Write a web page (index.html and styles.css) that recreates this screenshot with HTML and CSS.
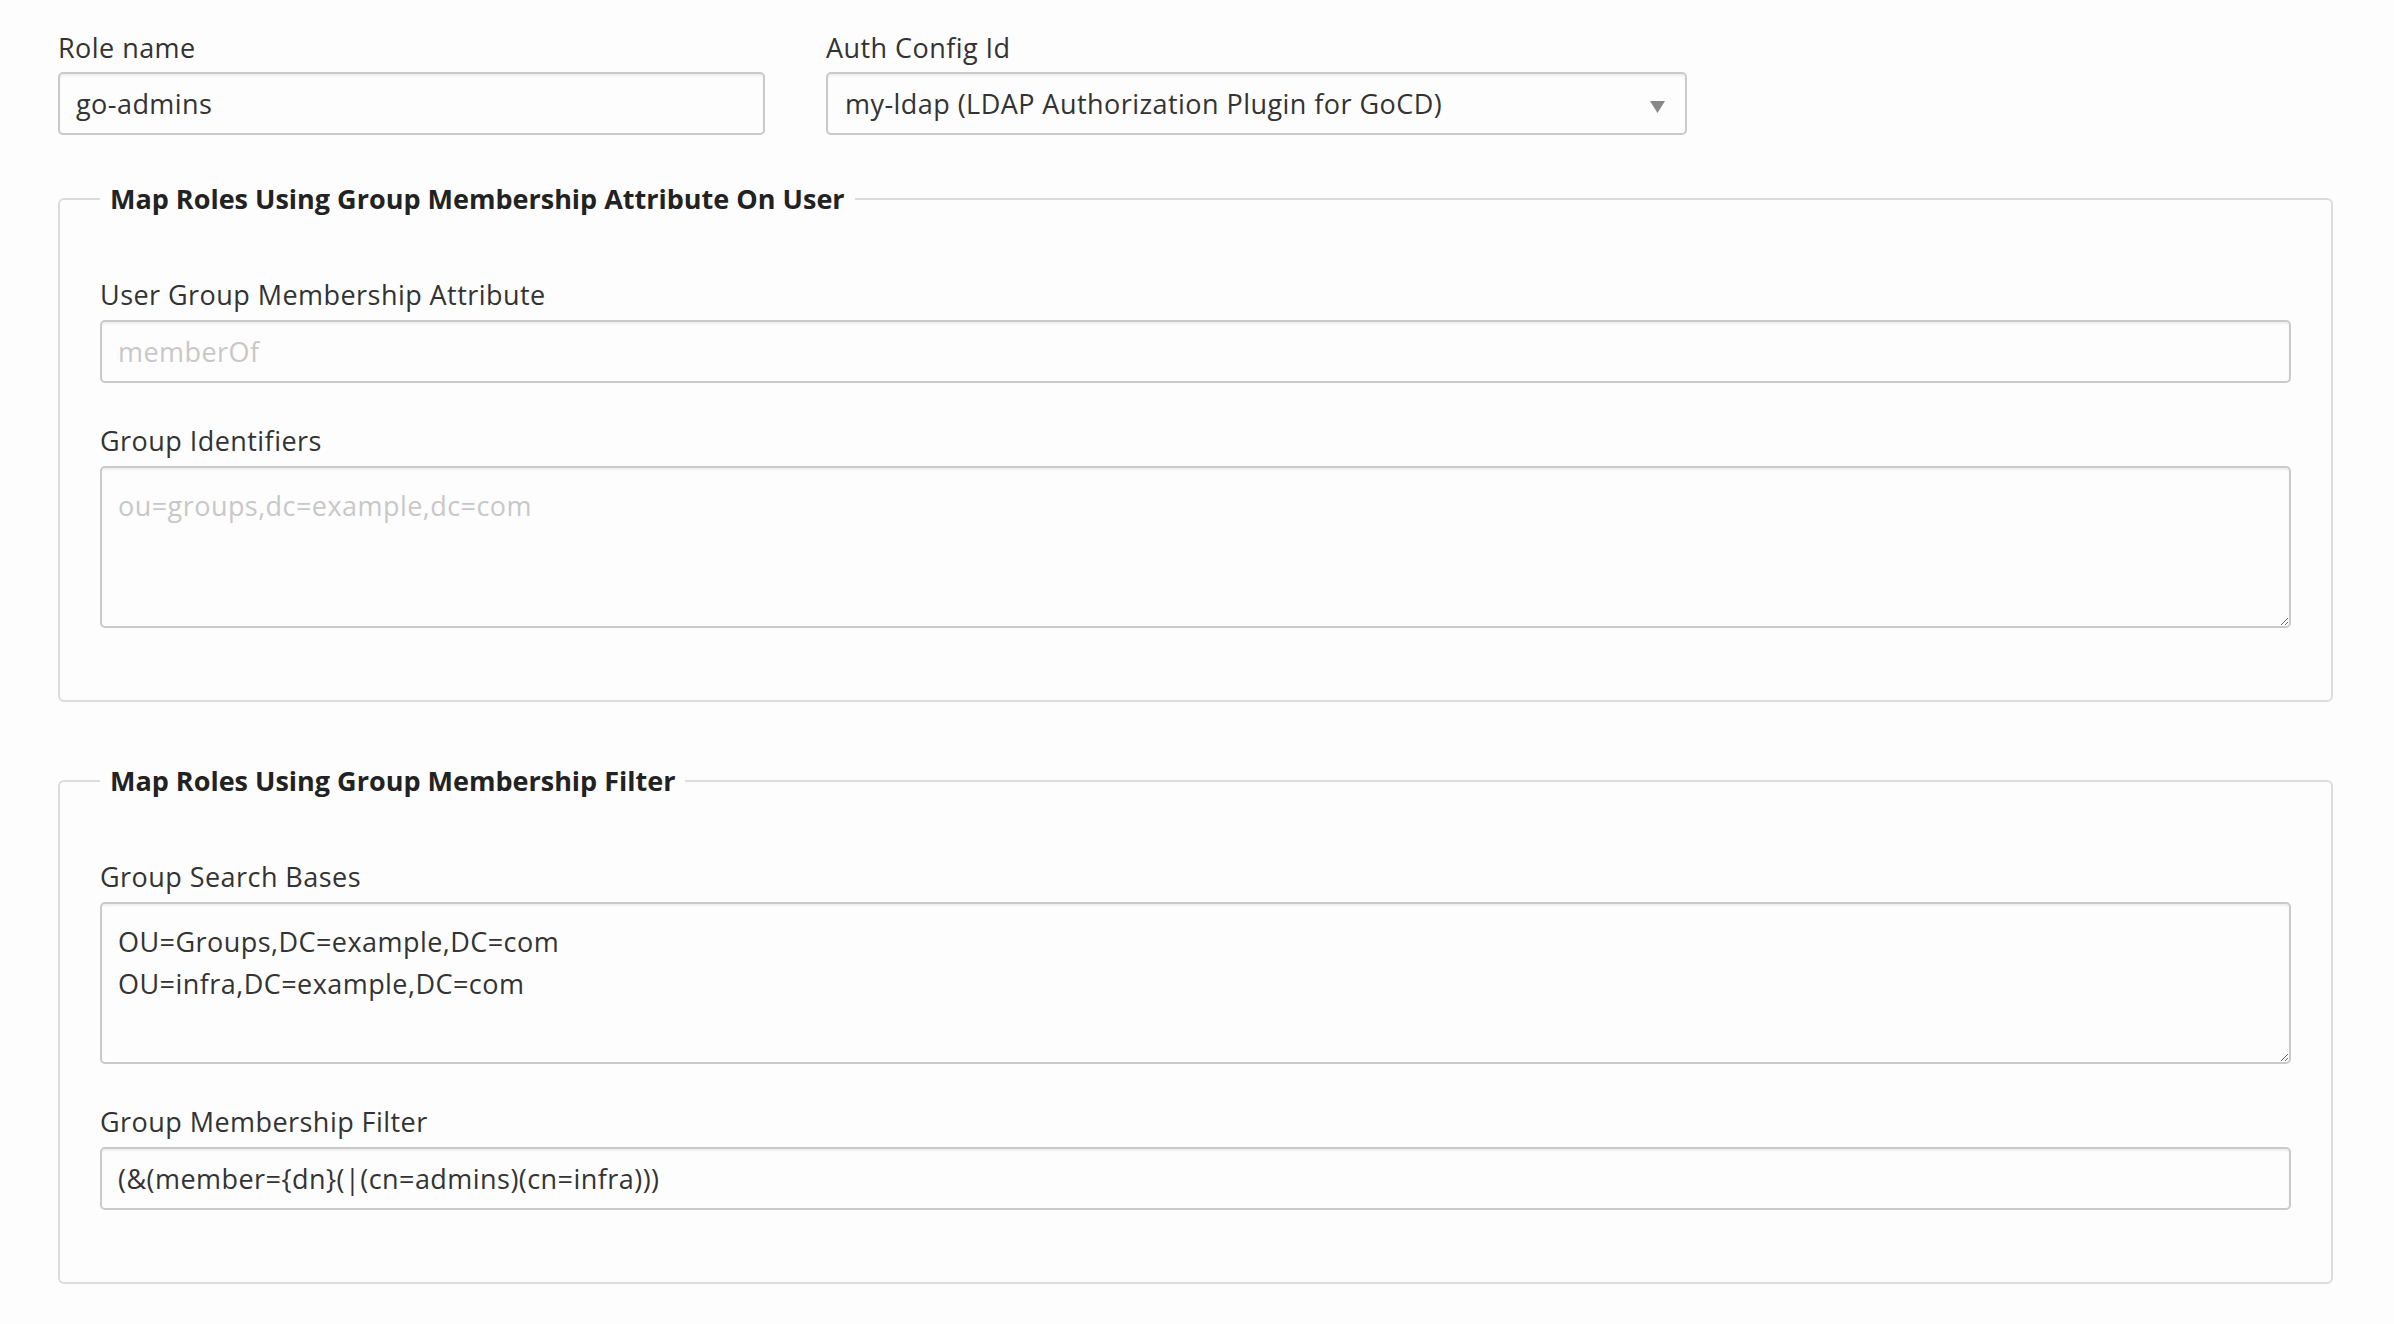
FILE: index.html
```html
<!DOCTYPE html>
<html lang="en">
<head>
<meta charset="utf-8">
<title>Role</title>
<link rel="stylesheet" href="styles.css">
</head>
<body>
<div class="page">
  <div class="top-row">
    <div class="field field-role">
      <label class="label top-label" for="role-name">Role name</label>
      <input class="text-input" id="role-name" type="text" value="go-admins">
    </div>
    <div class="field field-auth">
      <label class="label top-label" for="auth-config">Auth Config Id</label>
      <div class="select-wrap">
        <select class="select-input" id="auth-config">
          <option>my-ldap (LDAP Authorization Plugin for GoCD)</option>
        </select>
        <svg class="select-arrow" width="15" height="12" viewBox="0 0 15 12"><path d="M0 0 H15 L7.5 12 Z" fill="#888"/></svg>
      </div>
    </div>
  </div>

  <fieldset class="group-box first-box">
    <legend class="group-legend">Map Roles Using Group Membership Attribute On User</legend>
    <div class="field">
      <label class="label" for="attr">User Group Membership Attribute</label>
      <input class="text-input" id="attr" type="text" placeholder="memberOf">
    </div>
    <div class="field last">
      <label class="label" for="ids">Group Identifiers</label>
      <textarea class="text-area" id="ids" placeholder="ou=groups,dc=example,dc=com"></textarea>
    </div>
  </fieldset>

  <fieldset class="group-box second-box">
    <legend class="group-legend">Map Roles Using Group Membership Filter</legend>
    <div class="field">
      <label class="label" for="bases">Group Search Bases</label>
      <textarea class="text-area" id="bases">OU=Groups,DC=example,DC=com
OU=infra,DC=example,DC=com</textarea>
    </div>
    <div class="field last">
      <label class="label" for="filter">Group Membership Filter</label>
      <input class="text-input" id="filter" type="text" value="(&amp;(member={dn}(|(cn=admins)(cn=infra)))">
    </div>
  </fieldset>
</div>
</body>
</html>
```

FILE: styles.css
```css
html, body {
  margin: 0;
  padding: 0;
  background: #fdfdfd;
}

body {
  font-family: "Open Sans", "Liberation Sans", sans-serif;
  font-size: 27px;
  letter-spacing: 0.45px;
  color: #333;
}

.page {
  padding: 29px 61px 40px 58px;
}

.top-row {
  display: flex;
  gap: 61px;
}

.field-role {
  width: 707px;
}

.field-auth {
  width: 861px;
}

.field {
  display: flex;
  flex-direction: column;
  margin-bottom: 39px;
}

.top-row .field {
  margin-bottom: 0;
}

.field.last {
  margin-bottom: 0;
}

.label {
  display: block;
  line-height: normal;
  margin-bottom: 7px;
  color: #333;
}

.top-label {
  margin-bottom: 6px;
}

.text-input,
.select-input,
.text-area {
  box-sizing: border-box;
  width: 100%;
  font-family: "Open Sans", "Liberation Sans", sans-serif;
  font-size: 27px;
  letter-spacing: 0.45px;
  color: #333;
  background: #fdfdfd;
  border: 2px solid #cacaca;
  border-radius: 5px;
  box-shadow: inset 0 2px 2px rgba(0, 0, 0, 0.06);
  outline: none;
  margin: 0;
}

.text-input {
  height: 63px;
  padding: 0 16px;
}

.text-input::placeholder,
.text-area::placeholder {
  color: #c8c8c8;
  opacity: 1;
}

.select-wrap {
  position: relative;
}

.select-input {
  -webkit-appearance: none;
  appearance: none;
  height: 63px;
  padding: 0 50px 0 17px;
}

.select-arrow {
  position: absolute;
  right: 22px;
  top: 29px;
  pointer-events: none;
}

.text-area {
  display: block;
  height: 162px;
  padding: 17px 16px 11px 16px;
  line-height: 42px;
  resize: vertical;
}

.group-box {
  border: 2px solid #dcdcdc;
  border-radius: 6px;
  margin: 0;
  padding: 59px 40px 72px 40px;
  min-width: 0;
}

.first-box {
  margin-top: 45px;
}

.second-box {
  margin-top: 60px;
}

.group-legend {
  font-weight: 700;
  padding: 0 10px;
  line-height: normal;
  letter-spacing: 0;
  color: #222;
}
```
